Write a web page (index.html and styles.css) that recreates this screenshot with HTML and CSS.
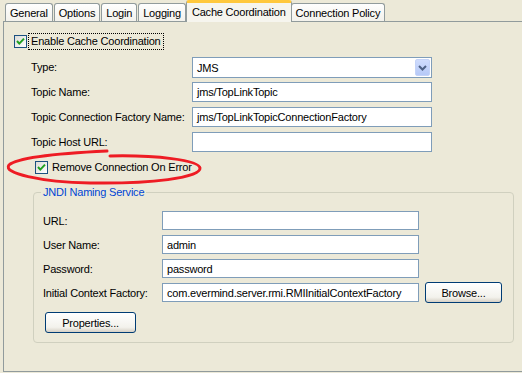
FILE: index.html
```html
<!DOCTYPE html>
<html lang="en">
<head>
  <meta charset="UTF-8" />
  <title>Cache Coordination</title>
  <link rel="stylesheet" href="styles.css">
</head>
<body>

  <!-- Tab strip -->
  <div class="tabs">
    <div class="tab">General</div>
    <div class="tab">Options</div>
    <div class="tab">Login</div>
    <div class="tab">Logging</div>
    <div class="tab tab-active">Cache Coordination</div>
    <div class="tab">Connection Policy</div>
  </div>

  <div class="panel">
    <label class="check check-enable">
      <span class="box"><svg viewBox="0 0 11 11" width="11" height="11"><path d="M2 5 L4.3 7.6 L9 2.6" fill="none" stroke="#21a121" stroke-width="2"/></svg></span>
      <span class="check-text focus">Enable Cache Coordination</span>
    </label>

    <div class="form">
      <span class="label">Type:</span>
      <div class="combo">
        <span>JMS</span>
        <span class="combo-btn"><svg viewBox="0 0 9 6" width="9" height="6"><path d="M1 1 L4.5 4.5 L8 1" fill="none" stroke="#4d6185" stroke-width="2"/></svg></span>
      </div>
      <span class="label">Topic Name:</span>
      <div class="field">jms/TopLinkTopic</div>
      <span class="label">Topic Connection Factory Name:</span>
      <div class="field">jms/TopLinkTopicConnectionFactory</div>
      <span class="label">Topic Host URL:</span>
      <div class="field"></div>
    </div>

    <label class="check check-remove">
      <span class="box"><svg viewBox="0 0 11 11" width="11" height="11"><path d="M2 5 L4.3 7.6 L9 2.6" fill="none" stroke="#21a121" stroke-width="2"/></svg></span>
      <span class="check-text">Remove Connection On Error</span>
    </label>

    <!-- JNDI group -->
    <div class="group">
      <span class="group-title">JNDI Naming Service</span>
      <div class="jndi">
        <span class="label">URL:</span>
        <div class="field"></div>
        <span></span>
        <span class="label">User Name:</span>
        <div class="field">admin</div>
        <span></span>
        <span class="label">Password:</span>
        <div class="field">password</div>
        <span></span>
        <span class="label">Initial Context Factory:</span>
        <div class="field">com.evermind.server.rmi.RMIInitialContextFactory</div>
        <button class="btn btn-browse">Browse...</button>
      </div>
      <button class="btn btn-props">Properties...</button>
    </div>

    <!-- hand drawn highlight -->
    <svg class="scribble" viewBox="0 145 220 45" width="220" height="45">
      <path d="M107 151 C65 153 18 157 9 165 C2 173 40 182 90 183 C150 184 201 178 200 168 C199 160 155 155 110 156" fill="none" stroke="#ee1c24" stroke-width="3" stroke-linecap="round"/>
    </svg>
  </div>

</body>
</html>
```

FILE: styles.css
```css
body {
  margin: 0;
  width: 522px;
  height: 373px;
  overflow: hidden;
  background-color: #ece9d8;
  font-family: "Liberation Sans", Arial, sans-serif;
  font-size: 11px;
  letter-spacing: -0.2px;
  color: #000;
}

/* Tabs */
.tabs {
  display: flex;
  align-items: flex-end;
  height: 21px;
  padding-left: 5px;
}

.tab {
  height: 18px;
  line-height: 18px;
  padding: 0 4px;
  margin-right: 1px;
  border: 1px solid #919b9c;
  border-bottom: none;
  border-radius: 3px 3px 0 0;
  box-sizing: border-box;
  background: linear-gradient(#fefefe, #f3f2ec);
  white-space: nowrap;
}

.tab-active {
  position: relative;
  z-index: 1;
  height: 22px;
  line-height: 19px;
  margin: 0 0 -1px -1px;
  padding: 0 5px;
  background: #f6f5ee;
  border-top: 3px solid #ffc83c;
  box-shadow: inset 0 -1px 0 #f6f5ee;
}

.tab-active + .tab {
  margin-left: -1px;
}

/* Panel */
.panel {
  position: relative;
  margin-left: 3px;
  width: 530px;
  height: 351px;
  box-sizing: border-box;
  border: 1px solid #919b9c;
  padding: 11px 10px 0;
}

.check {
  display: flex;
  align-items: center;
  gap: 2px;
  height: 17px;
}

.box {
  width: 13px;
  height: 13px;
  box-sizing: border-box;
  border: 1px solid #1c5180;
  background: linear-gradient(135deg, #dcdcd7, #ffffff);
  display: flex;
  align-items: center;
  justify-content: center;
}

.check-text {
  padding: 0 2px;
  line-height: 15px;
}

.focus {
  outline: 1px dotted #000;
}

.check-remove {
  margin: 7px 0 0 21px;
}

.form {
  display: grid;
  grid-template-columns: 161px 240px;
  grid-auto-rows: 20px;
  row-gap: 5px;
  margin: 7px 0 0 17px;
  align-items: center;
}

.field, .combo {
  height: 100%;
  box-sizing: border-box;
  border: 1px solid #7f9db9;
  background: #fff;
  padding-left: 4px;
  display: flex;
  align-items: center;
  white-space: nowrap;
  overflow: hidden;
}

.combo {
  height: 21px;
  align-self: start;
  justify-content: space-between;
  padding-right: 1px;
}

.combo-btn {
  width: 15px;
  height: 17px;
  border-radius: 2px;
  background: linear-gradient(#cfdcfd, #b6c9f7);
  border: 1px solid #c4d3f8;
  box-sizing: border-box;
  display: flex;
  align-items: center;
  justify-content: center;
}

/* Group box */
.group {
  position: relative;
  width: 481px;
  box-sizing: border-box;
  margin: 16px 0 0 19px;
  border: 1px solid #d0d0bf;
  border-radius: 4px;
  padding: 18px 9px 9px;
}

.group-title {
  position: absolute;
  top: -7px;
  left: 7px;
  padding: 0 2px;
  line-height: 13px;
  background-color: #ece9d8;
  color: #0046d5;
}

.jndi {
  display: grid;
  grid-template-columns: 119px 257px 77px;
  grid-auto-rows: 19px;
  row-gap: 5px;
  align-items: center;
}

.jndi .field {
  height: 19px;
}

.btn {
  height: 21px;
  box-sizing: border-box;
  border: 1px solid #003c74;
  border-radius: 3px;
  background: linear-gradient(#ffffff, #f3f2ec 75%, #d6d0c5);
  font-family: inherit;
  font-size: 11px;
  letter-spacing: -0.2px;
  color: #000;
  padding: 0;
}

.btn-browse {
  margin-left: 6px;
  width: 77px;
}

.btn-props {
  display: block;
  width: 91px;
  margin: 10px 0 0 2px;
}

.scribble {
  position: absolute;
  left: -4px;
  top: 123px;
}
```
